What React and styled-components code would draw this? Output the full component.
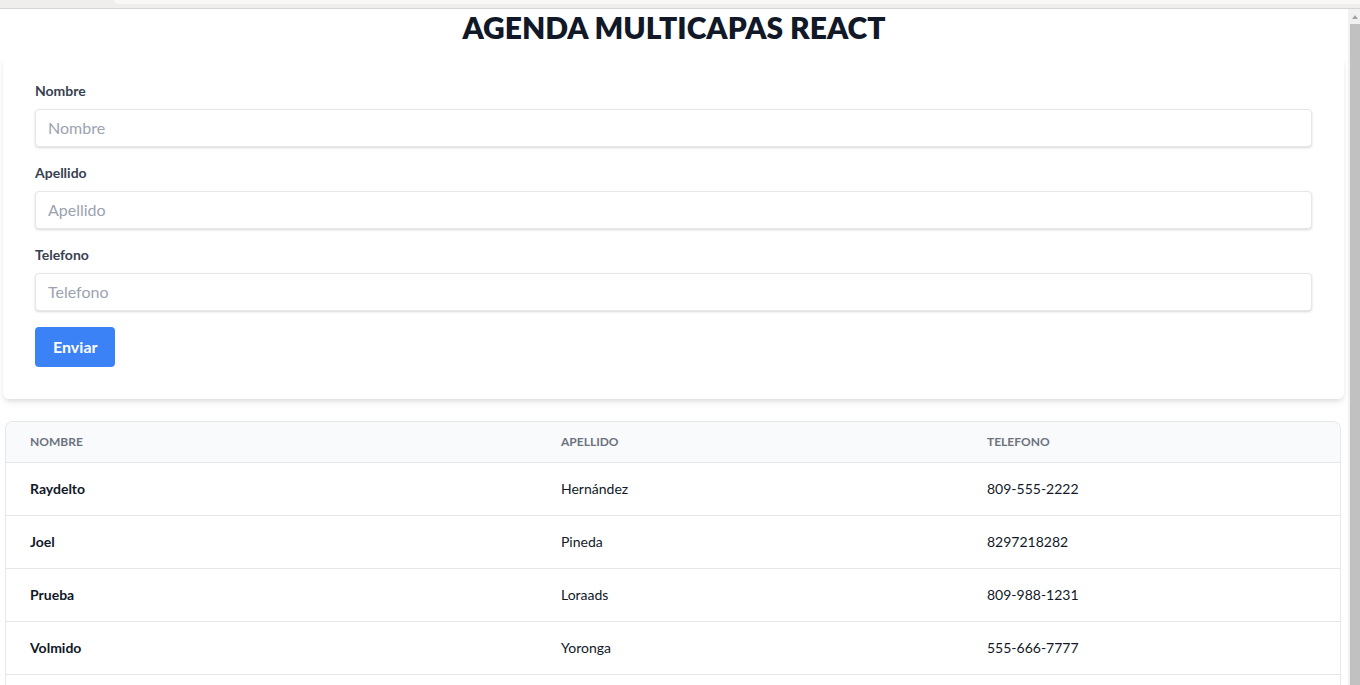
import React from 'react'
import styled, { createGlobalStyle } from 'styled-components'

// agenda: form on top, contact list below, inside a fake browser frame

const GlobalStyle = createGlobalStyle`
    html, body {
        margin: 0;
        padding: 0;
        overflow: hidden;
        background: #ffffff;
        font-family: Lato, "Open Sans", sans-serif;
    }
    * { box-sizing: border-box; }
`

const Frame = styled.div`
    display: flex;
    flex-direction: column;
    width: 1360px;
    height: 685px;
    overflow: hidden;
`

const ChromeStrip = styled.div`
    height: 9px;
    flex-shrink: 0;
    background: #efeeec;
    border-bottom: 1px solid #d4d4d4;
    display: flex;
`

const ChromeTab = styled.div`
    margin-left: 114px;
    flex: 1;
    height: 4px;
    background: #f8f8f7;
    border-bottom-left-radius: 5px;
`

const Viewport = styled.div`
    flex: 1;
    display: flex;
    min-height: 0;
`

const Page = styled.main`
    flex: 1;
    display: flex;
    flex-direction: column;
    min-width: 0;
`

const ScrollTrack = styled.div`
    width: 12px;
    flex-shrink: 0;
    background: #f1f1f1;
    display: flex;
    flex-direction: column;
    align-items: flex-end;
`

const ScrollArrow = styled.div`
    width: 10px;
    height: 15px;
    display: flex;
    align-items: center;
    justify-content: center;
    &::before {
        content: '';
        border-left: 3px solid transparent;
        border-right: 3px solid transparent;
        border-bottom: 4px solid #a3a3a3;
    }
`

const ScrollThumb = styled.div`
    width: 10px;
    flex: 1;
    background: #c1c1c1;
`

const Title = styled.h1`
    margin: 0;
    text-align: center;
    font-size: 30px;
    line-height: 36px;
    font-weight: 800;
    color: #111827;
`

const FormCard = styled.form`
    margin: 12px 4px 0 3px;
    padding: 24px 32px 32px;
    background: #fff;
    border-radius: 6px;
    box-shadow: 0 4px 6px -1px rgba(0, 0, 0, 0.1), 0 2px 4px -1px rgba(0, 0, 0, 0.06);
`

const Field = styled.div`
    margin-bottom: 16px;
`

const Label = styled.label`
    display: block;
    margin-bottom: 8px;
    font-size: 14px;
    line-height: 20px;
    font-weight: 700;
    color: #374151;
`

const Input = styled.input`
    display: block;
    width: 100%;
    padding: 8px 12px;
    font-family: inherit;
    font-size: 16px;
    line-height: 20px;
    color: #374151;
    border: 1px solid #e5e7eb;
    border-radius: 4px;
    box-shadow: 0 1px 3px rgba(0, 0, 0, 0.1), 0 1px 2px rgba(0, 0, 0, 0.06);
    outline: none;
    &::placeholder {
        color: #9ca3af;
    }
`

const Button = styled.button`
    display: block;
    padding: 8px 18px;
    font-family: inherit;
    font-size: 16px;
    line-height: 24px;
    font-weight: 700;
    color: #fff;
    background: #3b82f6;
    border: none;
    border-radius: 4px;
    cursor: pointer;
`

const TableBox = styled.div`
    flex: 1;
    margin: 22px 7px 0 5px;
    border: 1px solid #e5e7eb;
    border-bottom: none;
    border-radius: 8px 8px 0 0;
    overflow: hidden;
`

const Table = styled.table`
    width: 100%;
    border-collapse: collapse;
    table-layout: fixed;
`

const Th = styled.th`
    padding: 12px 24px;
    text-align: left;
    font-size: 12px;
    line-height: 16px;
    font-weight: 700;
    text-transform: uppercase;
    color: #6b7280;
    background: #f9fafb;
    border-bottom: 1px solid #e5e7eb;
`

const Td = styled.td`
    padding: 16px 24px;
    font-size: 14px;
    line-height: 20px;
    font-weight: ${props => props.strong ? 700 : 400};
    color: #111827;
    border-bottom: 1px solid #e5e7eb;
    white-space: nowrap;
`

const contactos = [
    { nombre: 'Raydelto', apellido: 'Hernández', telefono: '809-555-2222' },
    { nombre: 'Joel', apellido: 'Pineda', telefono: '8297218282' },
    { nombre: 'Prueba', apellido: 'Loraads', telefono: '809-988-1231' },
    { nombre: 'Volmido', apellido: 'Yoronga', telefono: '555-666-7777' },
]

export default function App() {
    return (
        <Frame>
            <GlobalStyle />
            <ChromeStrip>
                <ChromeTab />
            </ChromeStrip>
            <Viewport>
                <Page>
                    <Title>AGENDA MULTICAPAS REACT</Title>
                    <FormCard onSubmit={e => e.preventDefault()}>
                        <Field>
                            <Label htmlFor="nombre">Nombre</Label>
                            <Input id="nombre" placeholder="Nombre" />
                        </Field>
                        <Field>
                            <Label htmlFor="apellido">Apellido</Label>
                            <Input id="apellido" placeholder="Apellido" />
                        </Field>
                        <Field>
                            <Label htmlFor="telefono">Telefono</Label>
                            <Input id="telefono" placeholder="Telefono" />
                        </Field>
                        <Button type="submit">Enviar</Button>
                    </FormCard>
                    <TableBox>
                        <Table>
                            <colgroup>
                                <col style={{ width: 531 }} />
                                <col style={{ width: 426 }} />
                                <col />
                            </colgroup>
                            <thead>
                                <tr>
                                    <Th>Nombre</Th>
                                    <Th>Apellido</Th>
                                    <Th>Telefono</Th>
                                </tr>
                            </thead>
                            <tbody>
                                {contactos.map(c => (
                                    <tr key={c.telefono}>
                                        <Td strong>{c.nombre}</Td>
                                        <Td>{c.apellido}</Td>
                                        <Td>{c.telefono}</Td>
                                    </tr>
                                ))}
                            </tbody>
                        </Table>
                    </TableBox>
                </Page>
                <ScrollTrack>
                    <ScrollArrow />
                    <ScrollThumb />
                </ScrollTrack>
            </Viewport>
        </Frame>
    )
}
